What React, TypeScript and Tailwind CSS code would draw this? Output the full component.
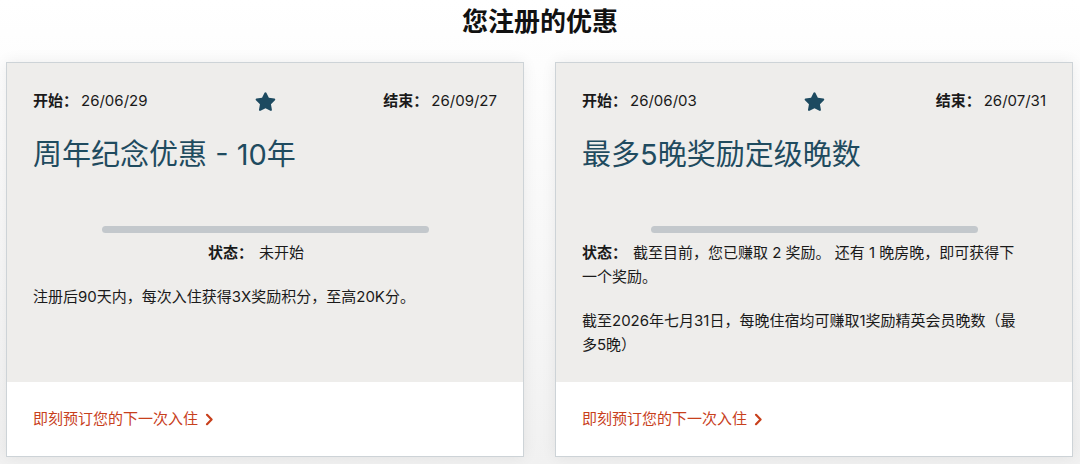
import React from 'react';

interface Offer {
    id: string;
    start: string;
    end: string;
    title: string;
    status: string;
    statusCentered: boolean;
    description: string;
}

const offers: Offer[] = [
    {
        id: 'anniv',
        start: '26/06/29',
        end: '26/09/27',
        title: '周年纪念优惠 - 10年',
        status: '未开始',
        statusCentered: true,
        description: '注册后90天内，每次入住获得3X奖励积分，至高20K分。',
    },
    {
        id: 'nights',
        start: '26/06/03',
        end: '26/07/31',
        title: '最多5晚奖励定级晚数',
        status: '截至目前，您已赚取 2 奖励。 还有 1 晚房晚，即可获得下一个奖励。',
        statusCentered: false,
        description: '截至2026年七月31日，每晚住宿均可赚取1奖励精英会员晚数（最多5晚）',
    },
];

const StarIcon = () => (
    <svg width="23" height="22" viewBox="0 0 24 23" fill="#1d4a60">
        <path d="M12 1.2c.4 0 .7.2.9.6l2.6 5.3 5.8.8c.9.1 1.2 1.2.6 1.8l-4.2 4.1 1 5.8c.2.9-.8 1.6-1.6 1.1L12 18l-5.2 2.7c-.8.4-1.8-.2-1.6-1.1l1-5.8-4.2-4.1c-.6-.6-.3-1.7.6-1.8l5.8-.8 2.6-5.3c.2-.4.6-.6 1-.6z" />
    </svg>
);

const Chevron = () => (
    <svg width="9" height="13" viewBox="0 0 9 13" fill="none" stroke="#c8401c" strokeWidth="2.2" strokeLinecap="round" strokeLinejoin="round">
        <path d="M2 1.8l4.6 4.7L2 11.2" />
    </svg>
);

const OfferCard: React.FC<{ offer: Offer }> = ({ offer }) => (
    <div className="w-[518px] h-[395px] flex flex-col border border-[#cdd3d7] bg-white shadow-[0_0_14px_rgba(0,0,0,0.07)]">
        <div className="h-[319px] bg-[#eeedeb] px-[26px] pt-[27px]">
            <div className="grid grid-cols-3 items-center h-[20px] text-[15px] text-[#1a1a1a]">
                <div className="flex gap-[3px]">
                    <span className="font-bold">开始：</span>
                    <span>{offer.start}</span>
                </div>
                <div className="flex justify-center pt-[1px] pl-[2px]">
                    <StarIcon />
                </div>
                <div className="flex justify-end gap-[3px]">
                    <span className="font-bold">结束：</span>
                    <span>{offer.end}</span>
                </div>
            </div>
            <h3 className="mt-[27px] text-[29px] leading-[36px] text-[#1f4b5f]">{offer.title}</h3>
            <div className="mt-[53px] mx-auto w-[327px] h-[7px] rounded-full bg-[#c3c8cc]" />
            <p className={`w-[446px] mt-[8px] text-[15px] leading-[24px] text-[#1a1a1a] ${offer.statusCentered ? 'text-center' : 'text-left'}`}>
                <span className="font-bold mr-[6px]">状态：</span>
                {offer.status}
            </p>
            <p className="w-[446px] mt-[20px] text-[15px] leading-[24px] text-[#1a1a1a]">{offer.description}</p>
        </div>
        <div className="flex-1 flex items-center px-[26px]">
            <a className="flex items-center gap-[7px] text-[15px] text-[#c8401c] cursor-pointer">
                即刻预订您的下一次入住
                <Chevron />
            </a>
        </div>
    </div>
);

export default function App() {
    return (
        <div
            className="w-[1080px] h-[464px] bg-linear-to-b from-white via-[#f8f8f8] to-[#f1f1f1]"
            style={{ fontFamily: 'Inter, "Noto Sans CJK SC", sans-serif' }}
        >
            <h2 className="pt-[6px] h-[38px] text-center text-[26px] leading-[32px] font-bold text-[#111]">您注册的优惠</h2>
            <div className="mt-[24px] flex pl-[6px] gap-[31px]">
                {offers.map(o => (
                    <OfferCard key={o.id} offer={o} />
                ))}
            </div>
        </div>
    );
}
